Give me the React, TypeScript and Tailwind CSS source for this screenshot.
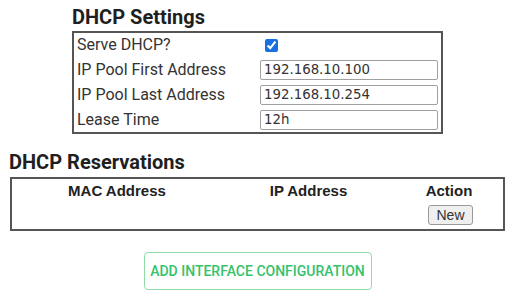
import React from "react";

const rows = [
  { label: "IP Pool First Address", value: "192.168.10.100" },
  { label: "IP Pool Last Address", value: "192.168.10.254" },
  { label: "Lease Time", value: "12h" },
];

export default function App() {
  return (
    <div className="w-[515px] h-[297px] bg-white font-['Roboto',sans-serif] text-[#222] overflow-hidden">
      <div className="w-[371px] mx-auto pt-[3px]">
        <h2 className="text-[20px] leading-[28px] font-bold text-[#1f1f1f]">DHCP Settings</h2>
        <div className="border-2 border-[#555] flex flex-col">
          <div className="h-[24px] flex items-center">
            <span className="w-[186px] pl-[3px] text-[16px] text-[#333]">Serve DHCP?</span>
            <input type="checkbox" defaultChecked className="w-[13px] h-[13px] ml-[5px] m-0 accent-[#1a6fe0]" />
          </div>
          {rows.map((r) => (
            <div key={r.label} className="h-[25px] flex items-center">
              <span className="w-[186px] pl-[3px] text-[16px] text-[#333] shrink-0">{r.label}</span>
              <input
                type="text"
                defaultValue={r.value}
                className="w-[178px] h-[20px] border border-[#a0a0a0] rounded-[2px] px-[3px] text-[13.33px] text-[#333] font-['DejaVu_Sans',sans-serif] outline-none"
              />
            </div>
          ))}
        </div>
      </div>
      <div className="px-[10px] mt-[14px]">
        <h2 className="text-[20px] leading-[29px] font-bold text-[#1f1f1f] -ml-[1px]">DHCP Reservations</h2>
        <div className="border-2 border-[#555] font-['Liberation_Sans',Arial,sans-serif]">
          <div className="grid grid-cols-[210px_173px_1fr] h-[24px] items-center text-[15px] font-bold text-[#222] text-center">
            <span>MAC Address</span>
            <span>IP Address</span>
            <span>Action</span>
          </div>
          <div className="grid grid-cols-[210px_173px_1fr] h-[26px] items-start">
            <span></span>
            <span></span>
            <div className="flex justify-center pl-[3px] pt-[2px]">
              <button className="w-[45px] h-[20px] bg-[#efefef] border border-[#999] rounded-[3px] text-[14px] leading-[18px] text-[#333]">
                New
              </button>
            </div>
          </div>
        </div>
      </div>
      <div className="flex justify-center mt-[21px]">
        <button className="w-[228px] h-[38px] border border-[#8edba6] rounded-[4px] text-[#36c26a] font-medium text-[14px] tracking-normal uppercase">
          Add Interface Configuration
        </button>
      </div>
    </div>
  );
}
